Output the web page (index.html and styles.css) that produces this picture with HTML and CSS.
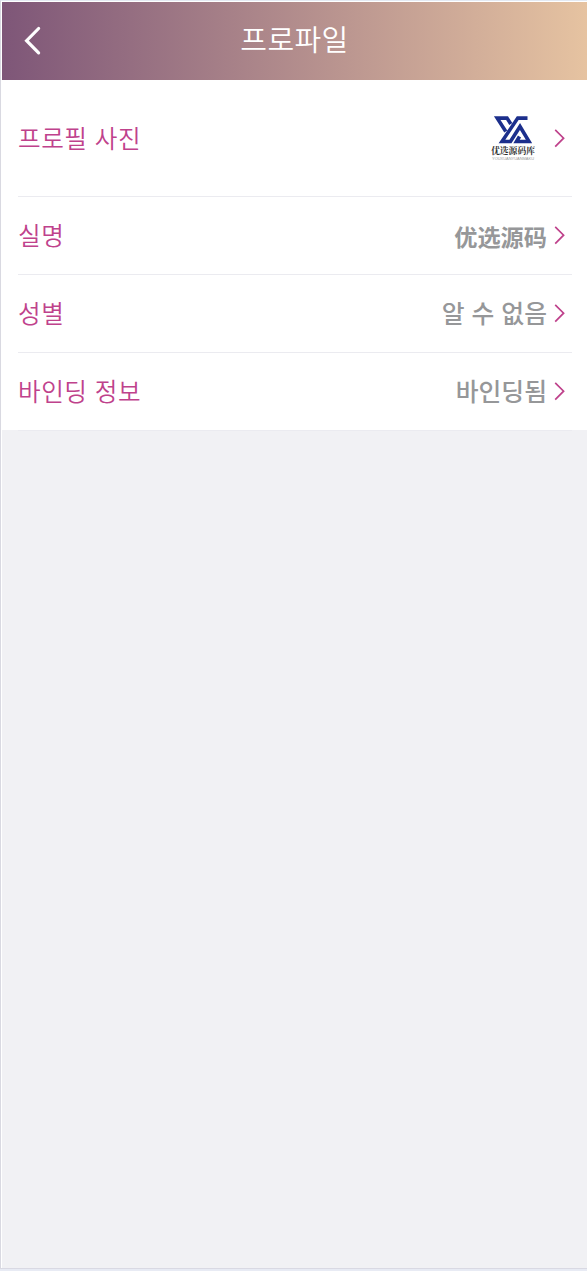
FILE: index.html
```html
<!DOCTYPE html>
<html lang="ko">
<head>
<meta charset="utf-8">
<title>프로파일</title>
<link rel="stylesheet" href="styles.css">
</head>
<body>
<div class="app">
  <header class="bar">
    <svg class="back" width="20" height="30" viewBox="0 0 20 30"><path d="M16.6 2.5 L4.6 14.7 L16.6 26.9"/></svg>
    <h1 class="title">프로파일</h1>
  </header>
  <main class="list">
    <div class="row row-photo">
      <span class="label">프로필 사진</span>
      <svg class="logo" width="48" height="52" viewBox="0 0 48 52">
        <path class="mark" d="M21.8 12L18 6.1H8.2L16.8 19.5M38.5 6.1H28.8L13 29.5H21.5L31 14.5L40 29.5H27.5L30.5 24.5"/>
        <text class="logo-name" x="2" y="41.6" textLength="44" lengthAdjust="spacingAndGlyphs">优选源码库</text>
        <text class="logo-sub" x="3" y="48.2" textLength="42" lengthAdjust="spacingAndGlyphs">YOUXUANYUANMAKU</text>
      </svg>
      <svg class="arrow" width="12" height="20" viewBox="0 0 12 20"><path d="M1.2 1.8L9.6 10.2L1.2 18.6"/></svg>
    </div>
    <div class="row">
      <span class="label">실명</span>
      <span class="value value-cn" lang="zh">优选源码</span>
      <svg class="arrow" width="12" height="20" viewBox="0 0 12 20"><path d="M1.2 1.8L9.6 10.2L1.2 18.6"/></svg>
    </div>
    <div class="row">
      <span class="label">성별</span>
      <span class="value">알 수 없음</span>
      <svg class="arrow" width="12" height="20" viewBox="0 0 12 20"><path d="M1.2 1.8L9.6 10.2L1.2 18.6"/></svg>
    </div>
    <div class="row">
      <span class="label">바인딩 정보</span>
      <span class="value">바인딩됨</span>
      <svg class="arrow" width="12" height="20" viewBox="0 0 12 20"><path d="M1.2 1.8L9.6 10.2L1.2 18.6"/></svg>
    </div>
  </main>
</div>
</body>
</html>
```
FILE: styles.css
```css
* { box-sizing: border-box; }
body {
  margin: 0;
  background: #e8ebf4;
  font-family: "Noto Sans CJK KR", sans-serif;
}
.app {
  height: 1269px;
  border-left: 1px solid #d9d9e1;
  border-top: 1px solid #e3e9f2;
  border-bottom: 1px solid #d9d9e3;
  padding: 1px 0 0 1px;
  background: linear-gradient(#f1f1f4, #f1f1f4) content-box, #fff;
}
.bar {
  display: grid;
  grid-template-columns: 60px 1fr 60px;
  align-items: center;
  height: 78px;
  background: linear-gradient(90deg, #7e5678, #e6c3a1);
}
.back { margin-left: 20px; }
.back path {
  fill: none;
  stroke: #fff;
  stroke-width: 3.2;
  stroke-linecap: round;
}
.title {
  margin: 0 0 6px;
  text-align: center;
  font-size: 29px;
  line-height: 40px;
  font-weight: 350;
  letter-spacing: 0.4px;
  color: #fff;
}
.list {
  height: 350px;
  padding-left: 16px;
  background: #fff;
}
.row {
  display: flex;
  align-items: center;
  height: 78px;
  margin-right: 15px;
  padding: 0 6px 1px 0;
  border-bottom: 1px solid #ebebf0;
}
.row-photo {
  height: 117px;
  padding-bottom: 0;
}
.label {
  flex: 1;
  margin-bottom: 3px;
  font-size: 24.6px;
  line-height: 34px;
  font-weight: 350;
  letter-spacing: 0.5px;
  color: #bf428c;
}
.row-photo .label { margin-bottom: 2px; }
.value {
  margin: 0 7px 2px 0;
  font-size: 24.8px;
  line-height: 34px;
  font-weight: 500;
  color: #969799;
}
.value-cn {
  margin: 2px 7px 0 0;
  font-family: "Noto Sans CJK SC", sans-serif;
  font-size: 23.2px;
  font-weight: 700;
}
.logo { margin-right: 17px; }
.mark {
  fill: none;
  stroke: #1c2f8c;
  stroke-width: 3.6;
}
.logo-name {
  font: 700 9px "Noto Serif CJK SC", "Noto Sans CJK SC", sans-serif;
  fill: #333;
}
.logo-sub {
  font: 4px "Liberation Sans", sans-serif;
  fill: #999;
}
.arrow path {
  fill: none;
  stroke: #bf428c;
  stroke-width: 1.7;
}
```
